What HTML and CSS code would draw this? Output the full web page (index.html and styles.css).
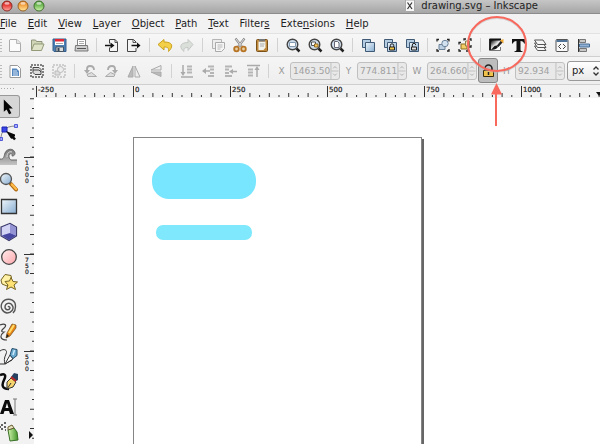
FILE: index.html
```html
<!DOCTYPE html>
<html lang="en">
<head>
<meta charset="utf-8">
<title>drawing.svg – Inkscape</title>
<link rel="stylesheet" href="styles.css">
</head>
<body>
<svg class="defs" width="0" height="0" aria-hidden="true">
  <defs>
    <linearGradient id="blue" x1="0" y1="0" x2="1" y2="1"><stop offset="0" stop-color="#f0f7fc"/><stop offset="1" stop-color="#86acd0"/></linearGradient>
    <linearGradient id="pink" x1="0" y1="0" x2="1" y2="1"><stop offset="0" stop-color="#ffeeee"/><stop offset="1" stop-color="#ffa6aa"/></linearGradient>
    <linearGradient id="red" x1="0" y1="0" x2="0" y2="1"><stop offset="0" stop-color="#c8221d"/><stop offset=".45" stop-color="#e8423e"/><stop offset="1" stop-color="#ffaaa4"/></linearGradient>
    <linearGradient id="amber" x1="0" y1="0" x2="0" y2="1"><stop offset="0" stop-color="#d9791b"/><stop offset=".45" stop-color="#f4a646"/><stop offset="1" stop-color="#ffe9a0"/></linearGradient>
    <linearGradient id="green" x1="0" y1="0" x2="0" y2="1"><stop offset="0" stop-color="#4f9a38"/><stop offset=".45" stop-color="#76bd5a"/><stop offset="1" stop-color="#d0f5b0"/></linearGradient>
    <linearGradient id="ink" x1="0" y1="0" x2="1" y2="1"><stop offset=".1" stop-color="#111"/><stop offset=".45" stop-color="#ddd"/><stop offset=".6" stop-color="#fff"/></linearGradient>
    <linearGradient id="wave" x1="0" y1="0" x2="0" y2="1"><stop offset="0" stop-color="#777"/><stop offset="1" stop-color="#c4c4c4"/></linearGradient>
    <linearGradient id="spray" x1="0" y1="0" x2="1" y2="0"><stop offset="0" stop-color="#d4f5b0"/><stop offset="1" stop-color="#3f9427"/></linearGradient>
  </defs>
</svg>
<div class="window">
  <header class="titlebar">
    <div class="lights">
      <button aria-label="Close"><svg viewBox="0 0 12 12"><circle cx="6" cy="6" r="5" fill="url(#red)" stroke="#8d2b25"/><ellipse cx="6" cy="3.4" rx="2.6" ry="1.4" fill="#fff" opacity=".6"/></svg></button>
      <button aria-label="Minimize"><svg viewBox="0 0 12 12"><circle cx="6" cy="6" r="5" fill="url(#amber)" stroke="#9a6222"/><ellipse cx="6" cy="3.4" rx="2.6" ry="1.4" fill="#fff" opacity=".6"/></svg></button>
      <button aria-label="Zoom"><svg viewBox="0 0 12 12"><circle cx="6" cy="6" r="5" fill="url(#green)" stroke="#40712f"/><ellipse cx="6" cy="3.4" rx="2.6" ry="1.4" fill="#fff" opacity=".6"/></svg></button>
    </div>
    <div class="title">
      <svg class="xdoc" viewBox="0 0 10 12"><path d="M.5 0H9.500V11.500H.5z" fill="#f7f7f7" stroke="#aaa"/><path d="M2.500 2.500L7 9M7 2.500L2.500 9" stroke="#333" stroke-width="1.200"/></svg>
      <span>drawing.svg – Inkscape</span>
    </div>
  </header>

  <nav class="menubar">
    <a href="#"><u>F</u>ile</a><a href="#"><u>E</u>dit</a><a href="#"><u>V</u>iew</a><a href="#"><u>L</u>ayer</a><a href="#"><u>O</u>bject</a><a href="#"><u>P</u>ath</a><a href="#"><u>T</u>ext</a><a href="#">Filter<u>s</u></a><a href="#">Exte<u>n</u>sions</a><a href="#"><u>H</u>elp</a>
  </nav>

  <div class="toolbar commands">
    <span class="grip"></span>
    <button aria-label="New"><svg viewBox="0 0 18 18"><path d="M4 3.500h7l3.500 3.500v8.500H3.500V4z" fill="#fbfbfb" stroke="#aaa"/><path d="M10.500 3.500v4h4" fill="#e4e4e4" stroke="#b8b8b8"/></svg></button>
    <button aria-label="Open"><svg viewBox="0 0 18 18"><path d="M3.500 14V4h4l1 1.500h5.500v3" fill="#d0d5b8" stroke="#8f967a"/><path d="M3.500 14.500L6 8h10l-2.500 6.500z" fill="#dfe4c8" stroke="#929a78"/></svg></button>
    <button aria-label="Save"><svg viewBox="0 0 18 18"><path d="M3 3h13v12.500H4L3 14.500z" fill="#4a7fb5" stroke="#365f8c"/><path d="M5 3h9v6H5z" fill="#fff"/><path d="M5 3h9v2.500H5z" fill="#e02733"/><path d="M6 7.500h7" stroke="#aaa"/><path d="M6 11h7.500v4.500H6z" fill="#ddd" stroke="#456"/><path d="M7.500 12h2v3h-2z" fill="#345"/></svg></button>
    <button aria-label="Print"><svg viewBox="0 0 18 18"><path d="M5.500 9V3.500h8V9" fill="#fff" stroke="#888"/><path d="M7 5.500h5M7 7.500h5" stroke="#aaa"/><path d="M3.500 9.500h12l.5 5.500H3z" fill="#ccc" stroke="#777"/><path d="M5 12.500h9" stroke="#555"/></svg></button>
    <i class="sep"></i>
    <button aria-label="Import"><svg viewBox="0 0 18 18"><path d="M6.500 7.500V3.500h5.500l2.500 2.500v9.500h-8v-4" fill="#f4f4f4" stroke="#444"/><path d="M12 3.500v3h2.500" fill="none" stroke="#555"/><path d="M2 9.500h6" stroke="#111" stroke-width="1.500"/><path d="M7.500 6.500l4 3-4 3z" fill="#111"/></svg></button>
    <button aria-label="Export"><svg viewBox="0 0 18 18"><path d="M11 7V6L8.500 3.500h-6v12H11V12" fill="#f4f4f4" stroke="#444"/><path d="M8 3.500v3h3" fill="none" stroke="#555"/><path d="M6.500 9.500h6" stroke="#111" stroke-width="1.500"/><path d="M12 6.500l3.500 3-3.500 3z" fill="#111"/></svg></button>
    <i class="sep"></i>
    <button aria-label="Undo"><svg viewBox="0 0 18 18"><path d="M2 8.500l6-5V6c6 0 8.500 2 7.500 5-.5 2-2 3.500-3 4.500 .5-3.500-.5-4.500-4.500-4.500v3z" fill="#f3d047" stroke="#c9a11d"/></svg></button>
    <button aria-label="Redo"><svg viewBox="0 0 18 18"><path d="M15 8.500l-5-5V6.500c-5 0-8 2-7 5 .5 2 2 3 3 4-.5-3 .5-4 4-4v3z" fill="#dadfda" stroke="#c4c8c4"/></svg></button>
    <i class="sep"></i>
    <button aria-label="Copy"><svg viewBox="0 0 18 18"><path d="M3.500 3.500h9v9h-9z" fill="#ededed" stroke="#b5b5b5"/><path d="M6.500 6.500h9v6l-3 3h-6z" fill="#f6f6f6" stroke="#aaa"/><path d="M8.500 9h5M8.500 11h5M8.500 13h3" stroke="#b8b8b8"/></svg></button>
    <button aria-label="Cut"><svg viewBox="0 0 18 18"><path d="M4.500 2.500l7 9M13.500 2.500l-7 9" stroke="#888" stroke-width="2.200"/><path d="M5 3l6 8M13 3l-6 8" stroke="#ddd"/><circle cx="5.500" cy="13" r="2.300" fill="#e9cfa5" stroke="#b77425" stroke-width="1.800"/><circle cx="12.500" cy="13" r="2.300" fill="#e9cfa5" stroke="#b77425" stroke-width="1.800"/></svg></button>
    <button aria-label="Paste"><svg viewBox="0 0 18 18"><rect x="3.500" y="3.500" width="11" height="12" rx="1" fill="#c08a3e" stroke="#7a5117"/><path d="M5.500 5.500h7v6l-2 2.500h-5z" fill="#f3f3ee"/><path d="M6 3h6v2.500H6z" fill="#777"/><path d="M7 8h4.500M7 10h4" stroke="#aaa"/></svg></button>
    <i class="sep"></i>
    <button aria-label="Zoom selection"><svg viewBox="0 0 18 18"><path d="M12.500 12.500l3 3" stroke="#222" stroke-width="2.500"/><circle cx="8.500" cy="8.500" r="5.300" fill="#cddceb" stroke="#444" stroke-width="1.400"/><path d="M5.500 6.500h6v4h-6z" fill="#fff" stroke="#8299b0"/></svg></button>
    <button aria-label="Zoom drawing"><svg viewBox="0 0 18 18"><path d="M12.500 12.500l3 3" stroke="#222" stroke-width="2.500"/><circle cx="8.500" cy="8.500" r="5.300" fill="#cddceb" stroke="#444" stroke-width="1.400"/><path d="M5.500 6h4v3.500h-4z" fill="#fff" stroke="#555"/><path d="M8.500 8h3.500v3H8.500z" fill="#ffc95a" stroke="#8b6826"/></svg></button>
    <button aria-label="Zoom page"><svg viewBox="0 0 18 18"><path d="M12.500 12.500l3 3" stroke="#222" stroke-width="2.500"/><circle cx="8.500" cy="8.500" r="5.300" fill="#cddceb" stroke="#444" stroke-width="1.400"/><path d="M6.500 5.500h3l1.500 1.500v4.500H6.500z" fill="#fff" stroke="#667"/></svg></button>
    <i class="sep"></i>
    <button aria-label="Duplicate"><svg viewBox="0 0 18 18"><path d="M3.500 3.500h8v8h-8z" fill="#b5cde2" stroke="#405a75"/><path d="M6.500 6.500h9v9h-9z" fill="url(#blue)" stroke="#405a75"/></svg></button>
    <button aria-label="Clone"><svg viewBox="0 0 18 18"><path d="M3.500 3.500h8v8h-8z" fill="#b5cde2" stroke="#405a75"/><path d="M6.500 6.500h9v9h-9z" fill="url(#blue)" stroke="#405a75"/><path d="M9.300 11v-1.500a1.700 1.700 0 013.400 0V11" fill="none" stroke="#222"/><path d="M8.500 11h5v3h-5z" fill="#f1c64a" stroke="#222"/></svg></button>
    <button aria-label="Unlink clone"><svg viewBox="0 0 18 18"><path d="M3.500 3.500h8v8h-8z" fill="#b5cde2" stroke="#405a75"/><path d="M6.500 6.500h9v9h-9z" fill="url(#blue)" stroke="#405a75"/><path d="M9.300 11v-2a1.700 1.700 0 013.400 0" fill="none" stroke="#222"/><path d="M8.500 11h5v3h-5z" fill="#ddd" stroke="#222"/></svg></button>
    <i class="sep"></i>
    <button aria-label="Group"><svg viewBox="0 0 18 18"><path d="M5 8.500h6v5H5z" fill="#bdd0e2" stroke="#6d8299"/><circle cx="11" cy="7.500" r="3.200" fill="#d3e2f0" stroke="#6d8299"/><path d="M3 5.500V3.500h2M13 3.500h2v2M15 13v2h-2M5 15H3v-2" fill="none" stroke="#222" stroke-width="1.300"/></svg></button>
    <button aria-label="Ungroup"><svg viewBox="0 0 18 18"><path d="M5 8h6v5H5z" fill="#f4cf63" stroke="#8b6c22"/><path d="M9.500 5h4v5h-4z" fill="#f1e3b3" stroke="#8b7c52"/><path d="M3 8.500V6.500h2M8 4.500V3h2M13 3h2v2M15 9v2h-2M12 13v2h-2M5 15H3v-2" fill="none" stroke="#222" stroke-width="1.300"/></svg></button>
    <i class="sep"></i>
    <button aria-label="Fill and stroke"><svg viewBox="0 0 18 18"><path d="M3 3.500h12L13 14.500H3z" fill="url(#ink)"/><path d="M2.500 3.500H14M3 3v11.500" fill="none" stroke="#111" stroke-width="1.800"/><path d="M3 14.500h10.500V11" fill="none" stroke="#777"/><path d="M3.500 14c2-1 3-4.500 6-4.500l1.500 1.500c-1 2-4 3-7.500 3z" fill="#151515"/><path d="M9.500 10L14 4.500 16 6l-4.500 5z" fill="#222"/><path d="M13 4.500L16.500 3v4.500z" fill="#f2a92f"/></svg></button>
    <button aria-label="Text and font"><svg viewBox="0 0 18 18"><path d="M3 3h13v4.500h-1Q14.700 5 11.500 5V14q0 1.200 2 1.200V16H5.500v-.8q2 0 2-1.200V5Q4.300 5 4 7.500H3z" fill="#111"/></svg></button>
    <button aria-label="Layers"><svg viewBox="0 0 18 18"><g fill="#f6f6f6" stroke="#555"><path d="M3.500 10h8.500l3 4.500H6.500z"/><path d="M3.500 7H12l3 4.500H6.500z"/><path d="M3.500 4H12l3 4.500H6.500z"/></g></svg></button>
    <button aria-label="XML editor"><svg viewBox="0 0 18 18"><rect x="3" y="3.500" width="12" height="12" rx="1" fill="#f8f8f8" stroke="#555"/><path d="M3.500 5h11" stroke="#4f7397" stroke-width="2"/><path d="M8 8l-2.500 2.500L8 13M10 8l2.500 2.500L10 13" fill="none" stroke="#444"/></svg></button>
    <button aria-label="Align"><svg viewBox="0 0 18 18"><path d="M3.500 3v13" stroke="#333"/><path d="M4.500 3.500h6v3h-6zM4.500 12.500h7v3h-7z" fill="#c8c8c8" stroke="#777"/><path d="M4.500 8h10v3h-10z" fill="#91b2d4" stroke="#466d96"/></svg></button>
  </div>

  <div class="toolbar options">
    <span class="grip"></span>
    <button aria-label="Select all"><svg viewBox="0 0 18 18"><path d="M4 3.500h7.500l3 3v9H4z" fill="#fff" stroke="#999"/><path d="M6 6.500h4.500L13 9v5H6z" fill="#5487bd"/><path d="M7 9h4M7 11h5M7 13h5" stroke="#d8e6f5"/></svg></button>
    <button aria-label="Select all layers"><svg viewBox="0 0 18 18"><rect x="3" y="3" width="12" height="12" fill="none" stroke="#111" stroke-dasharray="2 1"/><path d="M5 5.500h6l2 2v5H7l-2-2z" fill="#ddd" stroke="#444"/><path d="M5 8h6l2 2" fill="none" stroke="#444"/></svg></button>
    <button aria-label="Deselect"><svg viewBox="0 0 18 18"><rect x="3" y="3" width="12" height="12" fill="none" stroke="#aaa" stroke-dasharray="2 1"/><path d="M5 9h5v4H5z" fill="#ddd" stroke="#bbb"/><circle cx="10.500" cy="7.500" r="3" fill="#eee" stroke="#bbb"/></svg></button>
    <i class="sep"></i>
    <button aria-label="Rotate left"><svg viewBox="0 0 18 18"><path d="M6 9.500V7a3 3 0 013-3c3 0 4 2 4 4" fill="none" stroke="#aaa" stroke-width="1.800"/><path d="M3 8h6l-3 4z" fill="#aaa"/><path d="M6 12.500l4.500-2 5 4H7z" fill="#ddd" stroke="#aaa"/></svg></button>
    <button aria-label="Rotate right"><svg viewBox="0 0 18 18"><path d="M12 9.500V7a3 3 0 00-3-3C6 4 5 6 5 8" fill="none" stroke="#aaa" stroke-width="1.800"/><path d="M15 8H9l3 4z" fill="#aaa"/><path d="M12 12.500l-4.500-2-5 4H11z" fill="#ddd" stroke="#aaa"/></svg></button>
    <button aria-label="Flip horizontal"><svg viewBox="0 0 18 18"><path d="M8 4v11H3z" fill="#bbb" stroke="#aaa"/><path d="M10 4v11h5z" fill="#eee" stroke="#aaa"/></svg></button>
    <button aria-label="Flip vertical"><svg viewBox="0 0 18 18"><path d="M14 3.500V8H4z" fill="#eee" stroke="#aaa"/><path d="M14 14.500V10H4z" fill="#bbb" stroke="#aaa"/></svg></button>
    <i class="sep"></i>
    <button aria-label="Lower to bottom"><svg viewBox="0 0 18 18"><path d="M5 3v9M3 15h12" stroke="#aaa" stroke-width="1.500"/><path d="M2.500 10h5L5 14z" fill="#aaa"/><path d="M9 4.500h5M9 7.500h5M9 10.500h5" stroke="#b5b5b5" stroke-width="2"/></svg></button>
    <button aria-label="Lower"><svg viewBox="0 0 18 18"><path d="M3 9h7" stroke="#aaa" stroke-width="1.500"/><path d="M6 6v6L2 9z" fill="#aaa"/><path d="M8 4.500h6M10 7.500h4M10 11h4M8 14h6" stroke="#b5b5b5" stroke-width="2"/></svg></button>
    <button aria-label="Raise"><svg viewBox="0 0 18 18"><path d="M9 9.500h6" stroke="#aaa" stroke-width="1.500"/><path d="M11 7v5l-4-2.500z" fill="#aaa"/><path d="M3 4.500h7M3 7.500h4M3 11h4M3 14h7" stroke="#b5b5b5" stroke-width="2"/></svg></button>
    <button aria-label="Raise to top"><svg viewBox="0 0 18 18"><path d="M13 15V6M3 3.500h13" stroke="#aaa" stroke-width="1.500"/><path d="M10.500 8h5L13 4z" fill="#aaa"/><path d="M4 7.500h5M4 10.500h5M4 13.500h5" stroke="#b5b5b5" stroke-width="2"/></svg></button>
    <i class="sep"></i>
    <label for="x">X</label>
    <span class="field"><input id="x" type="text" value="1463.507" disabled><svg viewBox="0 0 9 18"><path d="M.5 0v18M1 9h8" stroke="#bbb"/><path d="M3 6l2-2 2 2M3 12l2 2 2-2" fill="none" stroke="#aaa"/></svg></span>
    <label for="y">Y</label>
    <span class="field"><input id="y" type="text" value="774.811" disabled><svg viewBox="0 0 9 18"><path d="M.5 0v18M1 9h8" stroke="#bbb"/><path d="M3 6l2-2 2 2M3 12l2 2 2-2" fill="none" stroke="#aaa"/></svg></span>
    <label for="w" class="wide">W</label>
    <span class="field"><input id="w" type="text" value="264.660" disabled><svg viewBox="0 0 9 18"><path d="M.5 0v18M1 9h8" stroke="#bbb"/><path d="M3 6l2-2 2 2M3 12l2 2 2-2" fill="none" stroke="#aaa"/></svg></span>
    <button class="lock" aria-label="Lock ratio" aria-pressed="true"><svg viewBox="0 0 18 18"><path d="M6 9V6.500a3.500 3.500 0 017 0V9" fill="none" stroke="#222" stroke-width="1.600"/><path d="M4.500 8.500h10v6h-10z" fill="#f0c24b" stroke="#3a2c0b"/><path d="M9.500 10v3" stroke="#222" stroke-width="1.500"/></svg></button>
    <label for="h">H</label>
    <span class="field"><input id="h" type="text" value="92.934" disabled><svg viewBox="0 0 9 18"><path d="M.5 0v18M1 9h8" stroke="#bbb"/><path d="M3 6l2-2 2 2M3 12l2 2 2-2" fill="none" stroke="#aaa"/></svg></span>
    <span class="unit"><select aria-label="Unit"><option>px</option></select><svg viewBox="0 0 8 10"><path d="M1.500 3.500L4 1l2.500 2.500M1.500 6.500L4 9l2.500-2.500" fill="none" stroke="#333" stroke-width="1.300"/></svg></span>
  </div>

  <main class="workspace">
    <aside class="toolbox">
      <span class="grip-h"></span>
      <button class="active" aria-label="Select"><svg viewBox="0 0 20 20"><path d="M4 2v13l3-2.500 2.500 5 2.500-1-2.500-5h4z" fill="#050505"/></svg></button>
      <button aria-label="Edit nodes"><svg viewBox="0 0 20 20"><path d="M1 17C1 10 4 4 16 4" fill="none" stroke="#888"/><path d="M2 5h5v5H2z" fill="#3a46e8" stroke="#1a24b0"/><path d="M14.500 2.500h3v3h-3zM0 15.500h2.500v3H0z" fill="#aab0ff" stroke="#5058d8"/><path d="M6 9l9 3.500v1.500l-3 3-1.500-1z" fill="#080808"/><path d="M12 14l3 3.500" stroke="#080808" stroke-width="2.500"/></svg></button>
      <button aria-label="Tweak"><svg viewBox="0 0 20 20"><path d="M0 18v-6c4 1 4-3 5-6 2-5 9-5 10 0 0 2-1 3-3 3 1-2-1-3-2-2-2 1-1 5 1 6h6v5z" fill="url(#wave)"/><path d="M0 12c4 1 4-3 5-6 2-5 9-5 10 0 0 2-1 3-3 3 1-2-1-3-2-2-2 1-1 5 1 6h6" fill="none" stroke="#666"/><path d="M7 10c0-4 2-6 5-5" fill="none" stroke="#ddd"/></svg></button>
      <button aria-label="Zoom"><svg viewBox="0 0 20 20"><path d="M11 12l5 5.500" stroke="#ad6811" stroke-width="4" stroke-linecap="round"/><path d="M12 12.500l4 4.500" stroke="#ffb947" stroke-width="2.500" stroke-linecap="round"/><circle cx="6" cy="7" r="5.500" fill="url(#blue)" stroke="#555" stroke-width="1.300"/></svg></button>
      <button aria-label="Rectangle"><svg viewBox="0 0 20 20"><path d="M1.500 2.500h15v14h-15z" fill="url(#blue)" stroke="#333" stroke-width="1.300"/></svg></button>
      <button aria-label="3D box"><svg viewBox="0 0 20 20"><path d="M1 5l9-3.500L16.500 5v9L9 18.500 1 14z" fill="#a9a9e4" stroke="#3c3c6c" stroke-width="1.200"/><path d="M10 2v9L2 13.500V5.500z" fill="#d3d3f4"/><path d="M10 11l6 2.500L9 18l-7-4.500z" fill="#4747a2"/><path d="M10 2l6 3.500v8L10 11z" fill="#9494d4"/></svg></button>
      <button aria-label="Ellipse"><svg viewBox="0 0 20 20"><circle cx="9" cy="10" r="7.300" fill="url(#pink)" stroke="#444" stroke-width="1.300"/></svg></button>
      <button aria-label="Star"><svg viewBox="0 0 20 20"><path d="M1 8l4-5.500 6 1 1 6-5 4.500-5-2z" fill="#fff1a5" stroke="#766525"/><path d="M11 5.500l2 4 4.500.5-3.500 3 1.500 4.500-4.500-2.500-4.500 2.500 1.500-4.500-3-3.500 4.500-.5z" fill="#ffe276" stroke="#766525"/></svg></button>
      <button aria-label="Spiral"><svg viewBox="0 0 20 20"><path d="M8 10c1-1 2 0 2 1-1 3-5 2-5-1 0-4 5-5 7-2 3 4-1 8-5 8-5-1-7-6-5-10 3-5 10-5 13 0 1 4 0 8-2 10" fill="none" stroke="#555" stroke-width="1.400"/></svg></button>
      <button aria-label="Pencil"><svg viewBox="0 0 20 20"><path d="M0 3c5-2 8 0 3 4-3 3 0 3 1 3-4 3-5 8 3 8" fill="none" stroke="#444" stroke-width="1.200"/><path d="M6 16l1-5 5-9 4 1v3l-6 8z" fill="#e98416" stroke="#72501d" stroke-width=".7"/><path d="M9 11l5-8" stroke="#ffde69" stroke-width="2"/><path d="M6 16l1-4 2 2z" fill="#222"/></svg></button>
      <button aria-label="Bezier"><svg viewBox="0 0 20 20"><path d="M0 4c4-3 8-1 6 3s-2 7-1 10l7-4" fill="none" stroke="#333"/><path d="M0 17h5M10 8l3 4-8 5z" fill="#fff" stroke="#333"/><path d="M10 8l2-6.500 5 1v6l-4 3z" fill="#68a8cc" stroke="#27506e"/><path d="M13 8l1.500-5" stroke="#cdeaff" stroke-width="1.500"/></svg></button>
      <button aria-label="Calligraphy"><svg viewBox="0 0 20 20"><path d="M0 3c6-2 6 1 4 5s-3 9 5 9" fill="none" stroke="#0b0b0b" stroke-width="2.500"/><path d="M7 17V10l4-4 5 4-3 5z" fill="#f6d46d" stroke="#333"/><path d="M11 5l3-4 4 1v6l-2 1z" fill="#26415f"/><path d="M11 5l5 4" stroke="#bd2424" stroke-width="2"/><path d="M7 17l4-6" stroke="#333"/></svg></button>
      <button aria-label="Text"><svg viewBox="0 0 20 20"><path d="M0 17L5 3h4l5 14h-4l-1-3H4.500l-1 3zM5.500 11h3L7 6z" fill="#0b0b0b" fill-rule="evenodd"/><path d="M13 2h4M15 2v16M13 18h4" stroke="#777"/></svg></button>
      <button aria-label="Spray"><svg viewBox="0 0 20 20"><path d="M8 8l6-2 3 4 1 8-8 1z" fill="url(#spray)" stroke="#386f25"/><path d="M8 8V5l4-2 2 3z" fill="#e6e3bf" stroke="#665d33"/><path d="M1 3h2M4 1h2M4 5h2M1 7h2M5 8h1M0 5h1" stroke="#333" stroke-width="1.500"/></svg></button>
    </aside>

    <svg class="ruler-v" aria-hidden="true">
      <path d="M9 3V2000" stroke="#333" stroke-width="4" stroke-dasharray="1 18.4" stroke-dashoffset="-10.300"/>
      <path d="M10 3V2000" stroke="#333" stroke-width="2" stroke-dasharray="1 18.4" stroke-dashoffset="-.6"/>
      <path d="M1 72.500h10M1 169.500h10M1 266.500h10" stroke="#333"/>
      <text y="80">1<tspan x="0" dy="6">0</tspan><tspan x="0" dy="6">0</tspan><tspan x="0" dy="6">0</tspan></text>
      <text y="177">7<tspan x="0" dy="6">5</tspan><tspan x="0" dy="6">0</tspan></text>
      <text y="274">5<tspan x="0" dy="6">0</tspan><tspan x="0" dy="6">0</tspan></text>
      <path d="M6 346l4 4-4 4z" fill="#111"/>
    </svg>

    <section class="view">
      <svg class="ruler-h" aria-hidden="true">
        <path d="M2 10H2000" stroke="#333" stroke-width="4" stroke-dasharray="1 18.4"/>
        <path d="M2 11H2000" stroke="#333" stroke-width="2" stroke-dasharray="1 18.4" stroke-dashoffset="-9.700"/>
        <path d="M2.500 1v11M99.500 1v11M196.500 1v11M293.500 1v11M390.500 1v11M487.500 1v11" stroke="#333"/>
        <text x="4" y="7">-250</text><text x="101" y="7">0</text><text x="198" y="7">250</text><text x="295" y="7">500</text><text x="392" y="7">750</text><text x="489" y="7">1000</text>
        <path d="M562 7h6l-3 4z" fill="#111"/>
      </svg>
      <svg class="canvas" role="img" aria-label="Drawing">
        <rect x="388" y="41" width="2" height="100%" fill="#666"/>
        <rect x="99.500" y="39.500" width="288" height="100%" fill="#fff" stroke="#858585"/>
        <rect x="118" y="65" width="104" height="36" rx="17" fill="#77e6fe"/>
        <rect x="122" y="127" width="96" height="15" rx="7" fill="#80e8fc"/>
      </svg>
    </section>
  </main>

  <svg class="callout" viewBox="0 0 62 114" aria-hidden="true">
    <ellipse cx="31" cy="31" rx="29" ry="27" fill="none" stroke="#bbb" stroke-width="2" opacity=".5"/>
    <ellipse cx="31" cy="30" rx="29" ry="27" fill="none" stroke="#f8685d" stroke-width="2"/>
    <path d="M30 112V78" stroke="#f8685d" stroke-width="2"/>
    <path d="M30.500 69l5.500 11.500H25z" fill="#f8685d"/>
  </svg>
</div>
</body>
</html>
```
FILE: styles.css
```css
* { box-sizing: border-box; }
body {
  margin: 0;
  font: 10px/14px "DejaVu Sans", sans-serif;
  color: #222;
}
.defs { position: absolute; }
.window {
  position: relative;
  display: flex;
  flex-direction: column;
  height: 100vh;
  overflow: hidden;
  background: #f2f2f2;
}
button {
  display: flex;
  align-items: center;
  justify-content: center;
  flex: none;
  margin: 0;
  padding: 0;
  border: 0;
  background: none;
}

/* Title bar */
.titlebar {
  display: flex;
  flex: none;
  justify-content: space-between;
  height: 14px;
  background: linear-gradient(#c6c6c6, #a6a6a6);
  border-bottom: 1px solid #8c8c8c;
}
.lights { display: flex; gap: 4px; padding-left: 1px; }
.lights svg { display: block; width: 12px; height: 12px; }
.lights button { height: 11px; }
.title { display: flex; gap: 6px; padding-right: 62px; line-height: 12px; }
.xdoc { width: 10px; height: 12px; }

/* Menu */
.menubar {
  display: flex;
  flex: none;
  gap: 11px;
  height: 20px;
  padding: 3px 0;
  border-bottom: 1px solid #e2e2e2;
}
.menubar a { color: inherit; text-decoration: none; }

/* Toolbars */
.toolbar {
  display: flex;
  flex: none;
  align-items: center;
  border-bottom: 1px solid #cfcfcf;
  white-space: nowrap;
}
.commands { height: 23px; background: linear-gradient(#f7f7f7, #eee); }
.options { height: 28px; background: linear-gradient(#f5f5f5, #eee); }
.grip {
  flex: none;
  width: 4px;
  height: 14px;
  background: radial-gradient(circle, #bbb 1px, transparent 1px) 0 0 / 2px 3px repeat-y;
}
.toolbar button { width: 22px; height: 22px; }
.toolbar button svg { width: 18px; height: 18px; }
.sep { flex: none; width: 9px; height: 14px; background: linear-gradient(#d2d2d2, #d2d2d2) center / 1px 100% no-repeat; }
.toolbar label { flex: none; width: 17px; color: #999; font-size: 9px; text-align: center; }
.toolbar label.wide { width: 20px; }
.field {
  display: flex;
  flex: none;
  width: 50px;
  height: 18px;
  overflow: hidden;
  border: 1px solid #c0c0c0;
  border-radius: 3px;
  background: #e9e9e9;
}
.field input {
  flex: 1;
  min-width: 0;
  padding: 0 0 0 2px;
  border: 0;
  background: none;
  color: #a0a0a0;
  font: inherit;
  font-size: 9px;
}
.field svg { flex: none; width: 9px; height: 16px; }
.toolbar .lock {
  width: 20px;
  height: 25px;
  margin-left: 1px;
  border: 1px solid #858585;
  border-radius: 3px;
  background: #bdbdbd;
}
.unit {
  display: flex;
  flex: 1 0 40px;
  align-items: center;
  height: 20px;
  margin: 0 -8px 0 2px;
  border: 1px solid #999;
  border-radius: 3px;
  background: linear-gradient(#fff, #e9e9e9);
}
.unit select {
  appearance: none;
  width: 24px;
  padding: 0 0 0 4px;
  border: 0;
  background: none;
  color: #222;
  font: inherit;
}
.unit svg { width: 8px; height: 10px; }

/* Workspace */
.workspace { display: flex; flex: 1; min-height: 0; }
.toolbox { display: flex; flex: none; flex-direction: column; width: 23px; overflow: hidden; }
.grip-h {
  flex: none;
  width: 15px;
  height: 9px;
  background: radial-gradient(circle, #aaa 1px, transparent 1px) 0 2px / 3px 3px repeat-x;
}
.toolbox button { justify-content: flex-start; width: 20px; height: 25px; }
.toolbox svg { width: 20px; height: 20px; }
.toolbox .active {
  height: 23px;
  margin: 1px 0;
  border: 1px solid #999;
  border-left: 0;
  border-radius: 0 3px 3px 0;
  background: #d6d6d6;
}
.ruler-v { flex: none; width: 11px; height: 100%; }
.ruler-v text, .ruler-h text { font-size: 7px; fill: #222; stroke: #222; stroke-width: .2px; }
.ruler-v text { font-size: 6px; transform: translate(2px, 0); }
.view { display: flex; flex: 1; flex-direction: column; min-width: 0; }
.ruler-h { flex: none; width: 100%; height: 13px; }
.canvas { flex: 1; width: 100%; min-height: 0; background: #fff; }

/* Annotation over the toolbar */
.callout { position: absolute; top: 14px; left: 466px; width: 62px; height: 114px; pointer-events: none; }
```
